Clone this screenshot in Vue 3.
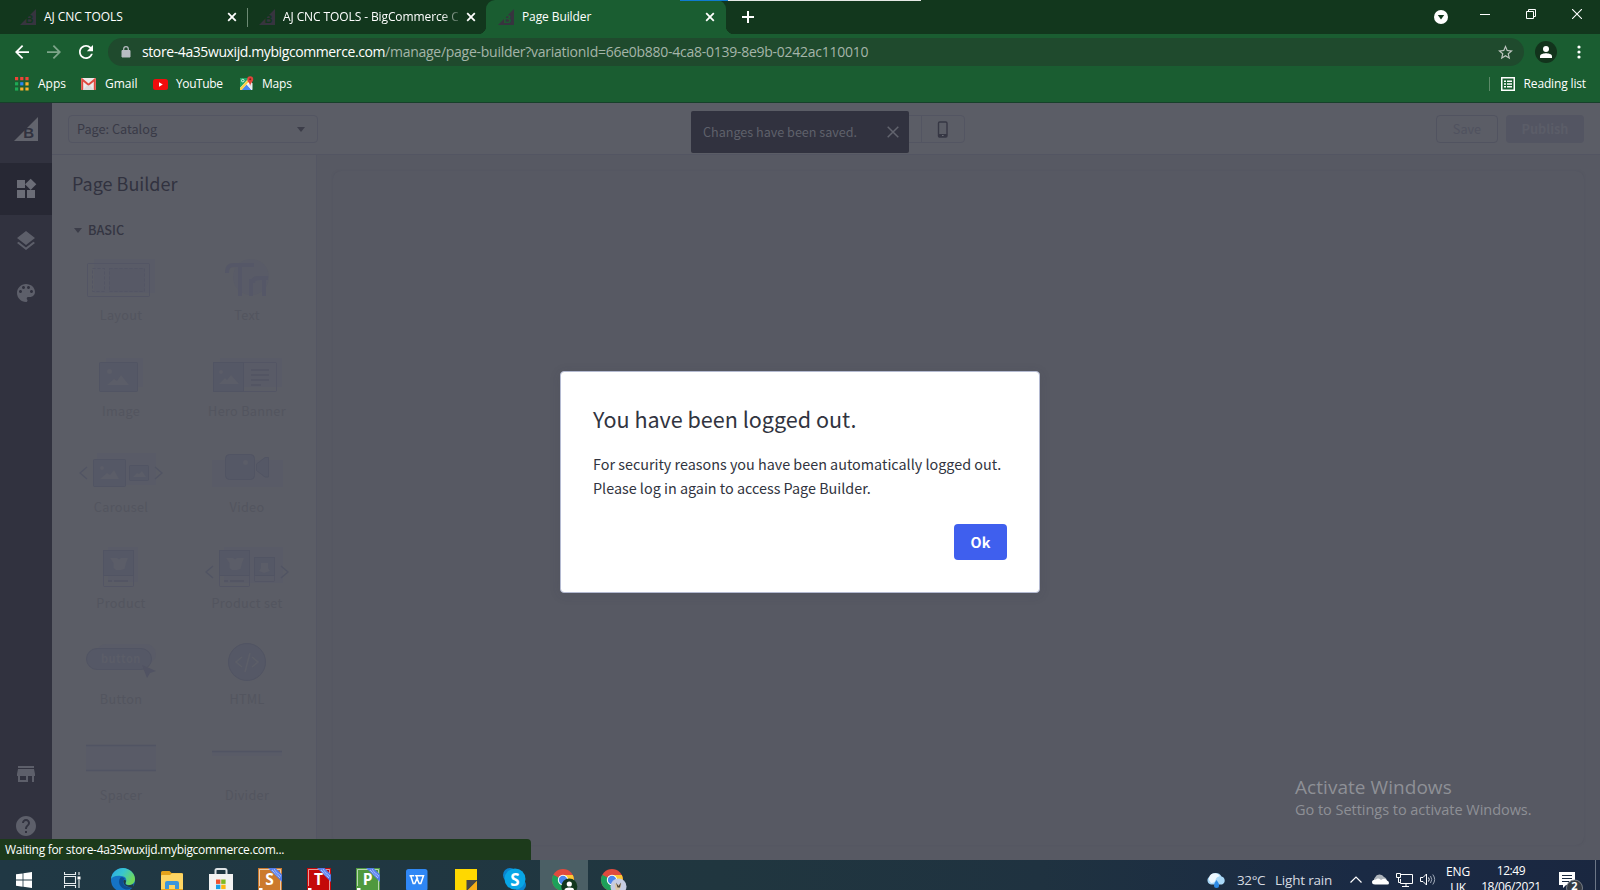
<script setup>
const tabs = [
  { title: 'AJ CNC TOOLS', cls: 'first' },
  { title: 'AJ CNC TOOLS - BigCommerce C', cls: 'second' },
  { title: 'Page Builder', cls: 'active' }
]
const widgets = ['Layout', 'Text', 'Image', 'Hero Banner', 'Carousel', 'Video', 'Product', 'Product set', 'Button', 'HTML', 'Spacer', 'Divider']
const office = [
  { letter: 'S', cls: 'orange' },
  { letter: 'T', cls: 'red' },
  { letter: 'P', cls: 'green' }
]
const nav = [
  { active: true, d: 'M13 13v8h8v-8h-8zM3 21h8v-8H3v8zM3 3v8h8V3H3zm13.66-1.31L11 7.34 16.66 13l5.66-5.66-5.66-5.65z' },
  { active: false, d: 'M11.99 18.54l-7.37-5.73L3 14.07l9 7 9-7-1.63-1.27-7.38 5.74zM12 16l7.36-5.73L21 9l-9-7-9 7 1.63 1.27L12 16z' },
  { active: false, d: 'M12 3c-4.97 0-9 4.03-9 9s4.03 9 9 9c.83 0 1.5-.67 1.5-1.5 0-.39-.15-.74-.39-1.01-.23-.26-.38-.61-.38-.99 0-.83.67-1.5 1.5-1.5H16c2.76 0 5-2.24 5-5 0-4.42-4.03-8-9-8zm-5.5 9c-.83 0-1.5-.67-1.5-1.5S5.67 9 6.5 9 8 9.67 8 10.5 7.33 12 6.5 12zm3-4C8.67 8 8 7.33 8 6.5S8.67 5 9.5 5s1.5.67 1.5 1.5S10.33 8 9.5 8zm5 0c-.83 0-1.5-.67-1.5-1.5S13.67 5 14.5 5s1.5.67 1.5 1.5S15.33 8 14.5 8zm3 4c-.83 0-1.5-.67-1.5-1.5S16.67 9 17.5 9s1.5.67 1.5 1.5-.67 1.5-1.5 1.5z' }
]
</script>

<template>
  <div class="screen">
    <div class="tabstrip">
      <div v-for="t in tabs" :key="t.cls" class="tab" :class="t.cls">
        <svg class="fav" width="16" height="16" viewBox="0 0 16 16"><path d="M0 16L16 0V16Z" fill="#37343f" /><text class="favb" x="5.6" y="14">B</text></svg>
        <span class="tabtitle">{{ t.title }}</span>
        <svg class="tabx" width="10" height="10" viewBox="0 0 10 10"><path d="M1.2 1.2L8.8 8.8M8.8 1.2L1.2 8.8" stroke="#fff" stroke-width="1.8" /></svg>
      </div>
      <svg class="plus" width="12" height="12" viewBox="0 0 12 12"><path d="M6 0V12M0 6H12" stroke="#fff" stroke-width="2" /></svg>
      <div class="wincontrols">
        <svg width="14" height="14" viewBox="0 0 14 14" class="drop"><circle cx="7" cy="7" r="7" fill="#fff" /><path d="M3.8 5H10.2L7 9.5Z" fill="#12371d" /></svg>
        <svg width="10" height="10" viewBox="0 0 10 10"><path d="M0 5.5H10" stroke="#fff" /></svg>
        <svg width="10" height="10" viewBox="0 0 10 10"><path d="M.5 2.5H7.5V9.5H.5ZM2.5 2.5V.5H9.5V7.5H7.5" stroke="#fff" fill="none" /></svg>
        <svg width="10" height="10" viewBox="0 0 10 10"><path d="M0 0L10 10M10 0L0 10" stroke="#fff" stroke-width="1.1" /></svg>
      </div>
      <div class="loadline"><i></i><b></b></div>
    </div>

    <div class="toolbar">
      <svg class="back" width="14" height="14" viewBox="4 4 16 16"><path d="M20 11H7.83l5.59-5.59L12 4l-8 8 8 8 1.41-1.41L7.83 13H20v-2z" fill="#fff" /></svg>
      <svg class="fwd" width="14" height="14" viewBox="4 4 16 16"><path d="M12 4l-1.41 1.41L16.17 11H4v2h12.17l-5.58 5.59L12 20l8-8z" fill="#7ea58a" /></svg>
      <svg class="reload" width="14" height="14" viewBox="4 4 16 16"><path d="M17.65 6.35C16.2 4.9 14.21 4 12 4c-4.42 0-7.99 3.58-7.99 8s3.57 8 7.99 8c3.73 0 6.84-2.55 7.73-6h-2.08c-.82 2.33-3.04 4-5.65 4-3.31 0-6-2.69-6-6s2.69-6 6-6c1.66 0 3.14.69 4.22 1.78L13 11h7V4l-2.35 2.35z" fill="#fff" /></svg>
      <div class="omnibox">
        <svg width="10" height="12" viewBox="0 0 10 12"><path d="M1 4.5H9V11H1Z" fill="#b8bcc2" stroke="#b8bcc2" stroke-linejoin="round" /><path d="M2.7 5V3a2.3 2.3 0 0 1 4.6 0V5" fill="none" stroke="#b8bcc2" stroke-width="1.2" /></svg>
        <span class="url"><span class="host">store-4a35wuxijd.mybigcommerce.com</span><span class="path">/manage/page-builder?variationId=66e0b880-4ca8-0139-8e9b-0242ac110010</span></span>
        <svg class="star" width="15" height="15" viewBox="2 2 20 20"><path d="M22 9.24l-7.19-.62L12 2 9.19 8.63 2 9.24l5.46 4.73L5.82 21 12 17.27 18.18 21l-1.63-7.03L22 9.24zM12 15.4l-3.76 2.27 1-4.28-3.32-2.88 4.38-.38L12 6.1l1.71 4.04 4.38.38-3.32 2.88 1 4.28L12 15.4z" fill="#bcc4be" /></svg>
      </div>
      <svg class="avatar" width="22" height="22" viewBox="0 0 22 22"><circle cx="11" cy="11" r="11" fill="#12331c" /><circle cx="11" cy="8" r="3" fill="#fff" /><path d="M5 17V15.2C5 13 9 12.2 11 12.2S17 13 17 15.2V17Z" fill="#fff" /></svg>
      <svg class="dots" width="4" height="14" viewBox="0 0 4 14"><circle cx="2" cy="2" r="1.6" fill="#fff" /><circle cx="2" cy="7" r="1.6" fill="#fff" /><circle cx="2" cy="12" r="1.6" fill="#fff" /></svg>
    </div>

    <div class="bookmarks">
      <svg class="apps" width="14" height="14" viewBox="0 0 14 14">
        <path d="M0 0h3.2v3.2H0zM5.2 0h3.2v3.2H5.2zM10.4 0h3.2v3.2h-3.2z" fill="#f04438" />
        <path d="M0 5.2h3.2v3.2H0z" fill="#1faa55" /><path d="M5.2 5.2h3.2v3.2H5.2z" fill="#2a86f3" /><path d="M10.4 5.2h3.2v3.2h-3.2zM5.2 10.4h3.2v3.2H5.2zM10.4 10.4h3.2v3.2h-3.2z" fill="#fbb22e" />
        <path d="M0 10.4h3.2v3.2H0z" fill="#1faa55" />
      </svg>
      <span class="bm b1">Apps</span>
      <svg class="gm" width="15" height="12" viewBox="0 0 15 12"><rect width="15" height="12" rx="1" fill="#eceaea" /><path d="M1.2 12V1.5L7.5 6.8 13.8 1.5V12" fill="none" stroke="#e04a3f" stroke-width="2" /><path d="M2.2 12L6 7.5H9L12.8 12Z" fill="#dcdcdc" /></svg>
      <span class="bm b2">Gmail</span>
      <svg class="yt" width="15" height="11" viewBox="0 0 15 11"><rect width="15" height="11" rx="2.5" fill="#f10d0d" /><path d="M6 3.3L9.8 5.5 6 7.7Z" fill="#fff" /></svg>
      <span class="bm b3">YouTube</span>
      <svg class="mp" width="15" height="15" viewBox="0 0 15 15"><path d="M1 2H13V14H1Z" fill="#fff" /><path d="M1 2H10L1 12Z" fill="#1fa463" /><path d="M2.5 14L7.5 8.5 12.5 14Z" fill="#4a86f0" /><path d="M1 14V12L9 3.5 10.5 5 2.6 14Z" fill="#fdd046" /><path d="M8 8.5L13.5 14V7Z" fill="#e7eaee" /><circle cx="3.8" cy="4.6" r="1.3" fill="none" stroke="#fff" stroke-width=".8" /><path d="M11.2 10C11 7 8.2 6 8.2 3.2a3 3 0 0 1 6 0C14.2 6 11.5 7 11.2 10Z" fill="#e0453a" /><circle cx="11.2" cy="3.2" r="1" fill="#7c1f1b" /></svg>
      <span class="bm b4">Maps</span>
      <div class="reading">
        <svg width="14" height="14" viewBox="0 0 14 14"><rect x=".75" y=".75" width="12.5" height="12.5" fill="none" stroke="#fff" stroke-width="1.5" /><path d="M3 4.2H5M3 7H5M3 9.8H5M6 4.2H11M6 7H11M6 9.8H11" stroke="#fff" stroke-width="1.6" /></svg>
        <span class="bm b5">Reading list</span>
      </div>
    </div>

    <div class="page">
      <div class="rail">
        <div class="logo"><svg width="24" height="24" viewBox="0 0 24 24"><path d="M0 24L24 0V24Z" fill="#62646d" /><text class="logob" x="9.2" y="20.6">B</text></svg></div>
        <div v-for="(n, i) in nav" :key="i" class="navitem" :class="{ on: n.active }"><svg width="24" height="24" viewBox="0 0 24 24"><path :d="n.d" /></svg></div>
        <div class="gap"></div>
        <div class="navitem"><svg width="24" height="24" viewBox="0 0 24 24"><path d="M20 4H4v2h16V4zm1 10v-2l-1-5H4l-1 5v2h1v6h10v-6h4v6h2v-6h1zm-9 4H6v-4h6v4z" /></svg></div>
        <div class="navitem"><svg width="24" height="24" viewBox="0 0 24 24"><path d="M12 2C6.48 2 2 6.48 2 12s4.48 10 10 10 10-4.48 10-10S17.52 2 12 2zm1 17h-2v-2h2v2zm2.07-7.75l-.9.92C13.45 12.9 13 13.5 13 15h-2v-.5c0-1.1.45-2.1 1.17-2.83l1.24-1.26c.37-.36.59-.86.59-1.41 0-1.1-.9-2-2-2s-2 .9-2 2H8c0-2.21 1.79-4 4-4s4 1.79 4 4c0 .88-.36 1.68-.93 2.25z" /></svg></div>
      </div>
      <div class="main">
        <div class="header">
          <div class="select"><span>Page: Catalog</span><svg width="8" height="5" viewBox="0 0 8 5"><path d="M0 0H8L4 5Z" fill="#3c3d49" /></svg></div>
          <div class="devices"><i></i><i class="phone"><svg width="12" height="17" viewBox="0 0 12 17"><rect x="1.5" y="1" width="8.5" height="15" rx="1.2" fill="none" stroke="#363744" stroke-width="1.4" /><path d="M1.5 13H10V16H1.5Z" fill="#363744" /><path d="M5 14.5H6.6" stroke="#6b6d76" /></svg></i></div>
          <div class="actions"><span class="save">Save</span><span class="publish">Publish</span></div>
        </div>
        <div class="body">
          <div class="panel">
            <h1>Page Builder</h1>
            <div class="section"><svg width="8" height="5" viewBox="0 0 8 5"><path d="M0 0H8L4 5Z" fill="#3c3d49" /></svg><span>BASIC</span></div>
            <div class="grid">
              <div v-for="w in widgets" :key="w" class="widget">
                <svg class="art" width="126" height="51" viewBox="0 0 126 51">
                  <g v-if="w === 'Layout'"><rect class="sh" x="36" y="4" width="61" height="34" /><rect class="o" x="29.5" y="8.5" width="62" height="33" rx="1" /><rect class="o" stroke-dasharray="3 2" x="34.5" y="13.5" width="12" height="23" /><rect class="m" stroke-dasharray="3 2" x="51.5" y="13.5" width="35" height="23" /></g>
                  <g v-else-if="w === 'Text'"><circle class="sh" cx="67" cy="22" r="18" /><path d="M43 18C43 10 47 10 52 10H70M56 10V41M67 41V24M80 41V24M69 28C69 23 72 23 76 23H84" fill="none" stroke="#555767" stroke-width="4" /></g>
                  <g v-else-if="w === 'Image'"><rect class="sh" x="48" y="7" width="37" height="29" /><rect class="f" x="41.5" y="11.5" width="38" height="29" rx="1" /><circle class="l" cx="51.5" cy="20.5" r="2.5" /><path class="l" d="M49 34L56 28 59 30 63 24 71 34Z" /></g>
                  <g v-else-if="w === 'Hero Banner'"><rect class="sh" x="36" y="7" width="62" height="29" /><rect class="o" x="29.5" y="11.5" width="63" height="29" rx="1" /><rect class="f" x="29.5" y="11.5" width="30" height="29" /><circle class="l" cx="37" cy="21" r="2" /><path class="l" d="M35 33L41 27 43 29 47 24 55 33Z" /><path class="a" d="M67 19H85M67 24H85M67 29H85M67 34H77" /></g>
                  <g v-else-if="w === 'Carousel'"><rect class="sh" x="39" y="6" width="59" height="32" /><rect class="f" x="35.5" y="12.5" width="32" height="27" rx="1" /><rect class="f" x="71.5" y="18.5" width="19" height="15" rx="1" /><circle class="l" cx="44" cy="21" r="2" /><path class="l" d="M42 32L49 26 52 28 56 23 61 32ZM75 30L79 26 81 27 84 24 88 30Z" /><path class="a" d="M29 20L22 26 29 32M97 20L104 26 97 32" /></g>
                  <g v-else-if="w === 'Video'"><rect class="sh" x="28" y="13" width="71" height="27" /><rect class="f" x="41.5" y="7.5" width="29" height="25" rx="4" /><path class="f" d="M72.5 17L81 10.5H84.5V30H81L72.5 23.5Z" /><circle class="l" cx="61.5" cy="15.5" r="2.5" /></g>
                  <g v-else-if="w === 'Product' || w === 'Product set'">
                    <rect v-if="w === 'Product'" class="sh" x="50" y="4" width="30" height="35" /><rect v-else class="sh" x="40" y="4" width="59" height="36" />
                    <g :class="{ left: w === 'Product set' }"><rect class="o" x="45.5" y="7.5" width="30" height="36" rx="1" /><rect class="f" x="45.5" y="7.5" width="30" height="25" /><path class="l" d="M52 15H59L61 16.5 63 15H70L68 20 66.500 26 63 27H58L55.500 25V20Z" /><path class="a" d="M50 38H54M56 38H70" /></g>
                    <g v-if="w === 'Product set'"><rect class="o" x="70.5" y="14.5" width="20" height="24" rx="1" /><rect class="f" x="70.5" y="14.5" width="20" height="18" /><path class="l" d="M77 20H84V25L86 28 80 30 75 28 77 25Z" /><path class="a" d="M29 23L22 29 29 35M97 23L104 29 97 35" /></g>
                  </g>
                  <g v-else-if="w === 'Button'"><rect class="sh" x="38" y="5" width="60" height="20" rx="10" /><rect class="f" x="28.5" y="9.5" width="65" height="21" rx="10.5" /><text class="btext" x="43" y="23.5">button</text><path d="M84 26L98 32 92 34 89 39Z" fill="#515363" /></g>
                  <g v-else-if="w === 'HTML'"><circle class="f" cx="63" cy="23" r="18.5" /><path d="M58 18L52 23 58 28M68 18L74 23 68 28M66 14L61 33" fill="none" stroke="#5c5e68" stroke-width="1.6" /></g>
                  <g v-else-if="w === 'Spacer'"><rect x="28" y="10" width="70" height="26" fill="#595b67" /><path class="a" d="M28 10.5H98M28 35.5H98" /></g>
                  <g v-else><rect class="sh" x="28" y="17" width="70" height="4" /><path class="a" d="M28 16.5H98" /></g>
                </svg>
                <span class="wl">{{ w }}</span>
              </div>
            </div>
          </div>
          <div class="canvas"><div class="frame"></div></div>
        </div>
      </div>

      <div class="toast"><span>Changes have been saved.</span><svg width="12" height="12" viewBox="0 0 12 12"><path d="M.7 .7L11.3 11.3M11.3 .7L.7 11.3" stroke="#62646e" stroke-width="1.5" /></svg></div>
      <div class="modal">
        <h2>You have been logged out.</h2>
        <p>For security reasons you have been automatically logged out.<br />Please log in again to access Page Builder.</p>
        <button>Ok</button>
      </div>
      <div class="activate"><div class="a1">Activate Windows</div><div class="a2">Go to Settings to activate Windows.</div></div>
      <div class="status"><span>Waiting for store-4a35wuxijd.mybigcommerce.com...</span></div>
    </div>

    <div class="taskbar">
      <div class="slot start"><svg width="16" height="16" viewBox="0 0 16 16"><path d="M0 2.3L6.6 1.4V7.6H0ZM7.4 1.3L16 0V7.6H7.4ZM0 8.4H6.6V14.7L0 13.8ZM7.4 8.4H16V16L7.4 14.8Z" fill="#fff" /></svg></div>
      <div class="slot tview"><svg width="17" height="16" viewBox="0 0 17 16"><path d="M.5 0V2.5H11.5V0M.5 16V13.5H11.5V16M.5 4.5H11.5V11.5H.5ZM15 0V3M15 8V16" stroke="#e8edef" stroke-width="1.1" fill="none" /><rect x="13.5" y="4.5" width="3" height="3" fill="#fff" /></svg></div>
      <div class="slot"><svg width="24" height="24" viewBox="0 0 24 24">
        <defs><linearGradient id="e1" x1="0" y1="0" x2="1" y2="0.5"><stop offset="0" stop-color="#2aa6e6" /><stop offset=".5" stop-color="#38c6cf" /><stop offset="1" stop-color="#6fd85a" /></linearGradient></defs>
        <circle cx="12" cy="12" r="12" fill="#1573c4" /><path d="M0 11C1 4 6 0 12 0S24 5 24 11C24 15 21 17 18 17S14 16 15 14 15 8 10 8C5 7 1 9 0 11Z" fill="url(#e1)" /><path d="M9.5 9.5C6 14 9 20 15 21.5 18 22 21 20 22 18.5 17 20.5 12 18 12 14 12 12 13 11 14 11 12.5 9 11 9 9.5 9.5Z" fill="#0d4d91" /><path d="M12.4 14C12 11.5 14 11 14.8 12.5 15.5 14 14 14.8 14.5 16 15.5 17.8 21 17.5 22.5 15.8L22 20 18 19C14.5 18.500 12.600 16.500 12.400 14Z" fill="#203a44" /></svg></div>
      <div class="slot"><svg width="22" height="20" viewBox="0 0 22 20"><path d="M0 1.500Q0 0 1.500 0H8.500L10.500 2H20Q22 2 22 4V20H0Z" fill="#e5a31b" /><path d="M0 5Q0 4 1 4H9L11 2.300H21Q22 2.300 22 3.500V18H0Z" fill="#fed563" /><path d="M4 18V12Q4 10 6 10H16Q18 10 18 12V18H14V14H8V18Z" fill="#3b96dd" /></svg></div>
      <div class="slot"><svg width="24" height="24" viewBox="0 0 24 24"><path d="M6.500 7V2.500Q6.500 1 8 1H16Q17.500 1 17.500 2.500V7" fill="none" stroke="#dce1e4" stroke-width="2" /><path d="M0 6H24V24H0Z" fill="#f3f3f3" /><path d="M7 11.500H11.400V15.900H7Z" fill="#f0522e" /><path d="M12.200 11.500H16.600V15.900H12.200Z" fill="#7fba22" /><path d="M7 16.700H11.400V21.100H7Z" fill="#19a0e8" /><path d="M12.200 16.700H16.600V21.100H12.200Z" fill="#fdb813" /></svg></div>
      <div v-for="o in office" :key="o.letter" class="slot"><svg width="24" height="24" viewBox="0 0 24 24" :class="o.cls"><rect width="24" height="24" class="obg" /><path d="M1.500 18V1.500H22.500V22.500H5" fill="none" stroke="#fff" stroke-opacity=".6" /><rect x="1" y="20" width="3.500" height="4" fill="#fff" /><path d="M10 0H17.500L24 6.500V14Z" fill="#527bea" /><path d="M14 2L22 10M16 1.500L23 8.500" stroke="#b9caff" stroke-width="1.200" stroke-dasharray="1 .7" /><text class="oletter" x="11.500" y="17.300">{{ o.letter }}</text></svg></div>
      <div class="slot"><svg width="22" height="22" viewBox="0 0 22 22"><rect width="21.500" height="22" rx="2.500" fill="#2f87f5" /><path d="M3.500 6.700H8.200M4.800 7L7.200 14.600H8.800L11 9.500 13.200 14.600H14.800L17.500 6.700H10L11.800 10" fill="none" stroke="#fff" stroke-width="1.500" /></svg></div>
      <div class="slot"><svg width="22" height="22" viewBox="0 0 22 22"><rect width="22" height="22" fill="#ffd800" /><path d="M11.500 11H22V12L12 22H11.500Z" fill="#474747" /><path d="M22 12V22H12Z" fill="#f9ae18" /></svg></div>
      <div class="slot"><svg width="24" height="24" viewBox="0 0 24 24"><circle cx="7" cy="7" r="7" fill="#0a84cf" /><circle cx="17" cy="17" r="6" fill="#0a84cf" /><circle cx="12" cy="11" r="10.500" fill="#08a6e6" /><text class="sletter" x="12" y="17.500">S</text></svg></div>
      <div v-for="k in [1, 2]" :key="k" class="slot" :class="{ current: k === 1 }"><svg class="chrome" width="26" height="24" viewBox="0 0 26 24"><circle cx="11" cy="11" r="11" fill="#e04a3e" /><path d="M11 11L1.300 5.800A11 11 0 0 0 11 22L15 15Z" fill="#1da05a" /><path d="M11 6H20.800A11 11 0 0 1 11 22L15.500 13Z" fill="#fcc934" /><circle cx="11" cy="11" r="5.200" fill="#fff" /><circle cx="11" cy="11" r="4.200" fill="#4a86ee" /><g v-if="k === 1"><circle cx="17.300" cy="17.500" r="8" fill="#12371d" /><circle cx="17.300" cy="15" r="2.600" fill="#fff" /><path d="M12.500 22V21Q12.500 18.500 17.300 18.500T22 21V22Z" fill="#fff" /></g><g v-else><circle cx="17.500" cy="17.500" r="8" fill="#c5cce2" /><path d="M13.500 14L16 15.500H19L20.500 13.500 19.500 19 17.500 21.500 20 24H16L14.500 20Z" fill="#d9c7a8" /><path d="M15 13.500L17.500 17 20 13.500 19 18.500H16.500Z" fill="#4d4438" /></g></svg></div>
      <div class="tray">
        <svg class="rain" width="21" height="16" viewBox="0 0 21 16"><path d="M5 12.500A4.200 4.200 0 0 1 4 4.500 6.500 6.500 0 0 1 15.500 4.500 4.200 4.200 0 0 1 16 12.500Z" fill="#a9d8f7" /><path d="M3 8A6 6 0 0 1 14 4Q10 5 9.500 8T5 11Z" fill="#eef8ff" /><path d="M10.500 8Q13.300 11.500 13 13.400A2.500 2.500 0 0 1 8 13.400Q7.800 11.500 10.500 8Z" fill="#2c8ae6" /></svg>
        <span class="deg">32°C</span><span class="cond">Light rain</span>
        <svg class="chev" width="12" height="7" viewBox="0 0 12 7"><path d="M.5 6.500L6 1 11.500 6.500" fill="none" stroke="#fff" stroke-width="1.200" /></svg>
        <svg class="cloud" width="17" height="11" viewBox="0 0 17 11"><path d="M3 8A3 3 0 0 1 3 3.500 5 5 0 0 1 12 3Q15 4 15 8Z" fill="#aeb4bb" /><path d="M3 10.500Q0 10.500 0 8T4 5.500Q6 3.500 9 6 13 3.500 15 6.500 17 7 17 9T14.500 10.500Z" fill="#fff" /></svg>
        <svg class="net" width="17" height="14" viewBox="0 0 17 14"><path d="M5 1.500H16.500V10.500H4.500V6M10 10.500V13M6 13.500H13" fill="none" stroke="#fff" /><path d="M.5 .5H4.500V4.500H.5ZM2.500 4.500V9.500H4.500" fill="#203040" stroke="#fff" /></svg>
        <svg class="spk" width="17" height="13" viewBox="0 0 17 13"><path d="M.5 4.500H3L6.500 1V12L3 8.500H.5ZM8.500 4.500Q10 6.500 8.500 8.500" fill="none" stroke="#fff" /><path d="M10.500 3Q13 6.500 10.500 10M12.800 1.500Q16.500 6.500 12.800 11.500" fill="none" stroke="#a0a9b8" /></svg>
        <div class="lang"><span>ENG</span><span>UK</span></div>
        <div class="clock"><span class="time">12:49</span><span class="date">18/06/2021</span></div>
        <svg class="note" width="25" height="20" viewBox="0 0 25 20"><path d="M0 0H16V13H7L4 16V13H0Z" fill="#fff" /><path d="M3 3.500H13M3 6.500H13M3 9.500H10" stroke="#1b2a40" stroke-width="1.200" /><circle cx="15.500" cy="16" r="8" fill="#353b43" stroke="#8b9098" stroke-width=".8" /><text class="count" x="15.500" y="18">2</text></svg>
        <div class="peek"></div>
      </div>
    </div>
  </div>
</template>

<style>
html, body { margin: 0; overflow: hidden; }
</style>

<style scoped>
.screen { width: 1600px; height: 890px; overflow: hidden; display: flex; flex-direction: column; font-family: "Open Sans", "Noto Sans", sans-serif; font-size: 12px; color: #fff; }
svg { display: block; flex: none; }
span { white-space: nowrap; }

.tabstrip { height: 34px; box-sizing: border-box; flex: none; background: #12371d; display: flex; align-items: flex-start; position: relative; }
.tab { height: 34px; display: flex; align-items: center; box-sizing: border-box; position: relative; }
.first { width: 239px; padding: 0 2px 0 20px; }
.second { width: 247px; padding-left: 20px; background: linear-gradient(#6c8a74, #6c8a74) 8px 8px / 1px 19px no-repeat; }
.active { width: 240px; padding-left: 12px; background: #1a5d31; border-radius: 9px 9px 0 0; }
.active::before, .active::after { content: ""; position: absolute; bottom: 0; width: 8px; height: 8px; }
.active::before { left: -8px; background: radial-gradient(circle at 0 0, transparent 8px, #1a5d31 8.500px); }
.active::after { right: -8px; background: radial-gradient(circle at 100% 0, transparent 8px, #1a5d31 8.500px); }
.tabtitle { margin-left: 8px; width: 175px; letter-spacing: -.1px; line-height: 18px; }
.first .tabtitle { width: 179px; letter-spacing: -.05px; }
.second .tabtitle { width: 175px; -webkit-mask-image: linear-gradient(90deg, #000 158px, transparent 180px); mask-image: linear-gradient(90deg, #000 158px, transparent 180px); }
.first .tabtitle + .tabx { margin-left: 4px; }
.tabx { margin-left: 8px; }
.favb { font: bold 11px "Liberation Sans", sans-serif; fill: #12371d; }
.active .favb { fill: #1a5d31; }
.plus { margin: 11px 0 0 16px; }
.wincontrols { margin-left: auto; display: flex; align-items: center; margin-right: 18px; height: 28px; gap: 36px; }
.wincontrols .drop { margin: 5px -4px 0 0; }
.loadline { position: absolute; left: 680px; top: 0; width: 241px; height: 1px; display: flex; }
.loadline i { width: 48px; background: #0f7bd0; }
.loadline b { flex: 1; background: #e6e9e6; }

.toolbar { height: 36px; flex: none; background: #1a5d31; display: flex; align-items: center; box-sizing: border-box; padding: 0 19px 0 15px; }
.fwd { margin-left: 18px; }
.reload { margin-left: 18px; }
.omnibox { margin-left: 15px; width: 1416px; height: 28px; border-radius: 14px; background: #1f4a2d; display: flex; align-items: center; box-sizing: border-box; padding: 0 11px 0 13px; font-size: 14px; }
.url { margin-left: 11px; line-height: 20px; }
.host { letter-spacing: -.4px; }
.path { color: #a5b5a9; letter-spacing: -.265px; }
.star { margin-left: auto; }
.avatar { margin-left: 11px; }
.dots { margin-left: 20px; }

.bookmarks { height: 33px; box-sizing: border-box; flex: none; background: #1a5d31; border-bottom: 1px solid #17402a; display: flex; align-items: flex-start; padding: 7px 14px 0 15px; }
.bm { line-height: 14px; }
.gm { margin: 1px 9px 0 16px; }
.yt { margin: 2px 8px 0 17px; }
.mp { margin: -1px 8px 0 17px; }
.b1 { margin-left: 9px; width: 27px; }
.b2 { width: 31px; }
.b3 { width: 46px; letter-spacing: -.4px; }
.b4 { letter-spacing: -.2px; }
.b5 { letter-spacing: -.15px; }
.reading { margin-left: auto; border-left: 1px solid #5c8a69; padding-left: 11px; display: flex; gap: 9px; }

.page { height: 757px; flex: none; position: relative; display: flex; overflow: hidden; font-family: "Noto Sans CJK SC", sans-serif; }
.rail { width: 52px; flex: none; background: #31323f; display: flex; flex-direction: column; height: 757px; }
.logo { height: 60px; box-sizing: border-box; padding: 14px 0 0 14px; flex: none; }
.logob { font: bold 15px "Liberation Sans", sans-serif; fill: #31323f; }
.navitem { height: 52px; flex: none; display: flex; align-items: center; justify-content: center; fill: #5d5f6a; }
.navitem.on { background: #272834; fill: #6b6d77; }
.gap { height: 429px; flex: none; }
.main { flex: 1; display: flex; flex-direction: column; min-width: 0; }
.header { height: 52px; box-sizing: border-box; flex: none; border-bottom: 1px solid #535562; background: #5b5d66; display: flex; align-items: flex-start; padding: 12px 16px 0 16px; }
.select { width: 250px; height: 28px; box-sizing: border-box; border: 1px solid #535562; border-radius: 4px; display: flex; align-items: center; padding: 0 12px 0 8px; justify-content: space-between; font-size: 12.700px; color: #393a47; }
.select span { padding-bottom: 2px; }
.devices { margin-left: 561px; width: 86px; height: 28px; box-sizing: border-box; border: 1px solid #535562; border-radius: 4px; display: flex; }
.devices i { width: 41px; }
.devices .phone { border-left: 1px solid #535562; display: flex; align-items: center; justify-content: center; }
.actions { margin-left: auto; display: flex; gap: 8px; font-size: 12.700px; color: #50525f; }
.save { width: 62px; height: 28px; box-sizing: border-box; border: 1px solid #515360; border-radius: 4px; text-align: center; line-height: 25px; }
.publish { width: 78px; height: 28px; border-radius: 4px; background: #535562; color: #5b5d68; text-align: center; line-height: 27px; font-weight: bold; }
.body { flex: 1; display: flex; min-height: 0; }
.panel { width: 264px; flex: none; background: #5b5d66; box-sizing: border-box; padding-top: 13px; }
h1 { margin: 0 0 0 20px; font-size: 18px; font-weight: 400; line-height: 30px; color: #31323f; }
.section { display: flex; align-items: center; gap: 6px; margin: 22px 0 0 22px; height: 20px; font-size: 12.700px; font-weight: 500; color: #343542; }
.section span { padding-bottom: 1px; }
.grid { display: grid; grid-template-columns: 126px 126px; grid-auto-rows: 96px; margin: 15px 0 0 6px; }
.widget { display: flex; flex-direction: column; align-items: center; }
.wl { line-height: 20px; margin-top: -1px; font-size: 12.700px; color: #53555f; letter-spacing: .3px; }
.sh { fill: #595b67; }
.o { fill: none; stroke: #535564; }
.m { fill: #575966; stroke: #535564; }
.f { fill: #555866; stroke: #515463; }
.l { fill: #5b5d68; }
.a { fill: none; stroke: #515463; stroke-width: 1.300; }
.left { transform: translateX(-10px); }
.btext { font: bold 11px "Noto Sans CJK SC", sans-serif; fill: #5b5d68; letter-spacing: .5px; }
.canvas { flex: 1; background: #575963; border-left: 1px solid #545663; box-sizing: border-box; padding: 16px 16px 15px; }
.frame { height: 674px; border-radius: 8px; box-shadow: 0 0 2px #51535f; background: #575963; }

.toast { position: absolute; left: 691px; top: 8px; width: 218px; height: 42px; box-sizing: border-box; border-radius: 2px; background: #31323f; display: flex; align-items: center; justify-content: space-between; padding: 0 10px 0 12px; color: #5f616b; font-size: 12.600px; }
.toast span { padding-bottom: 2px; }
.modal { position: absolute; left: 560px; top: 268px; width: 480px; height: 222px; box-sizing: border-box; background: #fff; border: 1px solid #b4bad1; border-radius: 4px; padding: 31px 32px; color: #313440; box-shadow: 0 2px 12px rgba(49, 52, 64, .12); display: flex; flex-direction: column; }
h2 { margin: 0; font-size: 21.550px; line-height: 32px; font-weight: 400; white-space: nowrap; }
p { margin: 17px 0 0; font-size: 14.360px; line-height: 24px; white-space: nowrap; }
button { margin: 24px 0 0 auto; width: 53px; height: 36px; border: 0; border-radius: 4px; background: #3f5fee; color: #fff; font: bold 14.400px "Noto Sans CJK SC", sans-serif; padding: 0 0 1px; }
.activate { position: absolute; left: 1295px; top: 669px; font-family: "Open Sans", sans-serif; color: #8e9096; white-space: nowrap; }
.a1 { font-size: 19px; line-height: 30px; letter-spacing: .05px; }
.a2 { font-size: 14.500px; line-height: 16px; letter-spacing: -.03px; }
.status { position: absolute; left: 0; bottom: 0; width: 531px; height: 21px; background: #1c3a1b; border-radius: 0 4px 0 0; padding-left: 5px; box-sizing: border-box; font: 12px/21px "Open Sans", sans-serif; letter-spacing: -.3px; color: #fff; }

.taskbar { height: 30px; flex: none; display: flex; background: linear-gradient(90deg, #203844, #20363f 45%, #1f3240 65%, #1a2a44 85%, #1a2740); overflow: hidden; }
.slot { width: 49px; height: 30px; flex: none; display: flex; justify-content: center; padding-top: 8px; box-sizing: border-box; }
.start { width: 48px; padding-top: 12px; }
.tview { width: 50px; padding: 12px 2px 0 0; }
.slot:nth-child(4) { padding-top: 11px; }
.slot:nth-child(9), .slot:nth-child(10), .slot:nth-child(12), .slot:nth-child(13) { padding-top: 9px; }
.chrome { margin-left: 2px; }
.current { background: #4b5f65; width: 48px; margin: 0 0 0 1px; }
.orange .obg { fill: #cc7a2c; }
.red .obg { fill: #c40909; }
.green .obg { fill: #4f993e; }
.oletter { font: bold 15.500px "Open Sans", sans-serif; fill: #fff; text-anchor: middle; }
.sletter { font: bold 17px "Open Sans", sans-serif; fill: #fff; text-anchor: middle; }
.tray { margin-left: auto; display: flex; align-items: flex-start; height: 30px; }
.rain { margin-top: 12px; }
.deg { margin: 10px 0 0 10px; width: 38px; font-size: 13.500px; line-height: 20px; letter-spacing: -.4px; color: #d6dae1; }
.cond { margin-top: 10px; width: 65px; font-size: 13.500px; line-height: 20px; letter-spacing: -.2px; color: #d6dae1; }
.chev { margin: 16px 0 0 10px; }
.cloud { margin: 14px 0 0 10px; }
.net { margin: 13px 0 0 7px; }
.spk { margin: 13px 0 0 7px; }
.lang { margin-left: 4px; width: 34px; text-align: center; display: flex; flex-direction: column; line-height: 16px; padding-top: 4px; letter-spacing: -.2px; }
.clock { margin-left: -4px; width: 80px; text-align: center; display: flex; flex-direction: column; line-height: 16px; padding-top: 3px; letter-spacing: -.4px; }
.note { margin: 12px 0 0 8px; overflow: visible; }
.count { font: bold 11px "Open Sans", sans-serif; fill: #fff; text-anchor: middle; }
.peek { margin-left: 11px; width: 1px; height: 30px; background: #6c7686; margin-right: 4px; }
</style>
